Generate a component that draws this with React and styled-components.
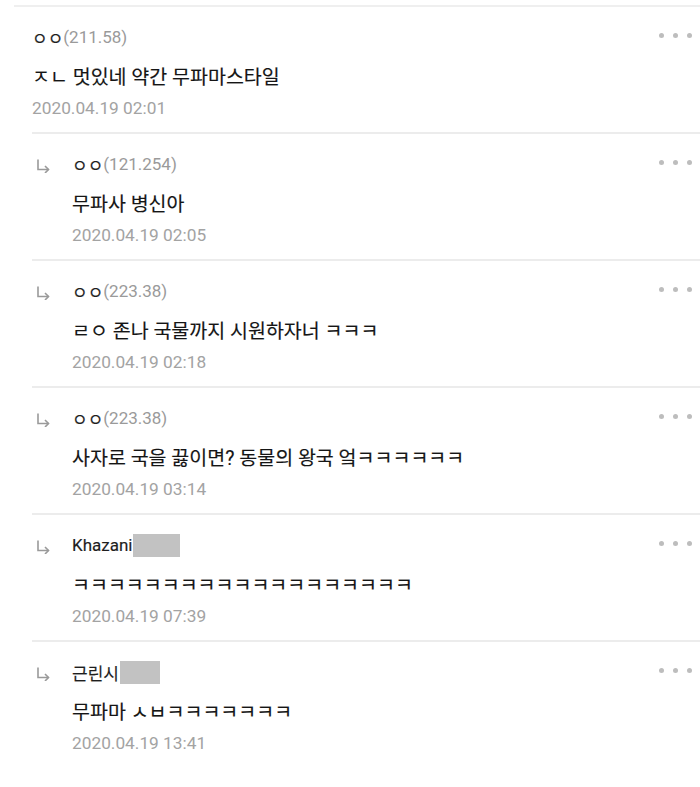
import { createGlobalStyle, styled } from "styled-components";

const GlobalStyle = createGlobalStyle`
  html, body {
    margin: 0;
    padding: 0;
    background: #fff;
  }
  body {
    font-family: Roboto, "Noto Sans CJK KR", "Noto Sans", sans-serif;
    color: #222;
  }
`;

const comments = [
  { nick: "ㅇㅇ", ip: "(211.58)", text: "ㅈㄴ 멋있네 약간 무파마스타일", date: "2020.04.19 02:01" },
  { reply: true, nick: "ㅇㅇ", ip: "(121.254)", text: "무파사 병신아", date: "2020.04.19 02:05" },
  { reply: true, nick: "ㅇㅇ", ip: "(223.38)", text: "ㄹㅇ 존나 국물까지 시원하자너 ㅋㅋㅋ", date: "2020.04.19 02:18" },
  { reply: true, nick: "ㅇㅇ", ip: "(223.38)", text: "사자로 국을 끓이면? 동물의 왕국 엌ㅋㅋㅋㅋㅋㅋ", date: "2020.04.19 03:14" },
  { reply: true, nick: "Khazani", masked: 47, text: "ㅋㅋㅋㅋㅋㅋㅋㅋㅋㅋㅋㅋㅋㅋㅋㅋㅋㅋㅋ", date: "2020.04.19 07:39" },
  { reply: true, nick: "근린시", masked: 40, text: "무파마 ㅅㅂㅋㅋㅋㅋㅋㅋㅋ", date: "2020.04.19 13:41" },
];

export default function App() {
  return (
    <Page>
      <GlobalStyle />
      <TopRule />
      <List>
        {comments.map((c, i) => (
          <Comment key={i} comment={c} />
        ))}
      </List>
    </Page>
  );
}

function Comment({ comment }) {
  return (
    <Item $reply={comment.reply}>
      <ArrowCell>
        {comment.reply && (
          <svg width="14" height="14" viewBox="0 0 14 14" fill="none" stroke="#9a9a9a" strokeWidth="1.6">
            <path d="M2 0.5 V10.5 H12.5" />
            <path d="M9 7 L12.5 10.5 L9 14" />
          </svg>
        )}
      </ArrowCell>
      <Body>
        <NameRow>
          <Nick>{comment.nick}</Nick>
          {comment.ip && <Ip>{comment.ip}</Ip>}
          {comment.masked && <Mask $w={comment.masked} />}
        </NameRow>
        <Text>{comment.text}</Text>
        <DateText>{comment.date}</DateText>
      </Body>
      <More>
        <Dot />
        <Dot />
        <Dot />
      </More>
    </Item>
  );
}

const Page = styled.div`
  width: 700px;
  min-height: 787px;
  background: #fff;
  padding-top: 5px;
`;

const TopRule = styled.div`
  height: 2px;
  margin-left: 14px;
  background: #efefef;
`;

const List = styled.div`
  padding-left: 32px;
`;

const Item = styled.div`
  display: grid;
  grid-template-columns: ${(p) => (p.$reply ? "40px" : "0px")} 1fr auto;
  padding: 18px 8px 13px 0;
  border-bottom: 2px solid #ececec;
  &:last-child {
    border-bottom: none;
  }
`;

const ArrowCell = styled.div`
  padding: 6px 0 0 4px;
`;

const Body = styled.div`
  display: flex;
  flex-direction: column;
`;

const NameRow = styled.div`
  display: flex;
  align-items: center;
  height: 24px;
  font-size: 17px;
`;

const Nick = styled.span`
  color: #1e1e1e;
  -webkit-text-stroke: 0.15px #1e1e1e;
`;

const Ip = styled.span`
  color: #9a9a9a;
`;

const Mask = styled.span`
  display: inline-block;
  width: ${(p) => p.$w}px;
  height: 23px;
  background: #c2c2c2;
  margin-left: 1px;
`;

const Text = styled.div`
  margin-top: 15px;
  height: 28px;
  line-height: 28px;
  font-size: 19.5px;
  color: #151515;
  -webkit-text-stroke: 0.15px #151515;
  white-space: nowrap;
`;

const DateText = styled.div`
  margin-top: 5px;
  height: 22px;
  line-height: 22px;
  font-size: 17.3px;
  color: #a3a3a3;
`;

const More = styled.div`
  display: flex;
  gap: 9px;
  height: 24px;
  align-items: center;
  margin-top: -2px;
`;

const Dot = styled.span`
  width: 5px;
  height: 5px;
  border-radius: 50%;
  background: #bdbdbd;
`;
